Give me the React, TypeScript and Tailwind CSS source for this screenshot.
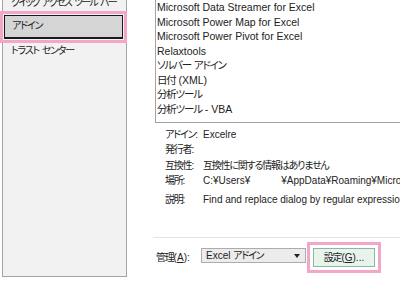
import React from 'react';

const jp = "font-['Liberation_Sans','Noto_Sans_CJK_JP',sans-serif] [font-feature-settings:'palt']";

const addins = [
  'Microsoft Data Streamer for Excel',
  'Microsoft Power Map for Excel',
  'Microsoft Power Pivot for Excel',
  'Relaxtools',
  'ソルバー アドイン',
  '日付 (XML)',
  '分析ツール',
  '分析ツール - VBA',
];

// squeeze the CJK runs so they look like Meiryo UI; latin stays as is
function T({ text, tight }: { text: string; tight?: boolean }) {
  const parts = text.split(/([\u3000-\u30ff\u4e00-\u9fff\uff00-\uffef]+)/);
  return (
    <>
      {parts.map((p, i) =>
        i % 2 === 1 ? (
          <span key={i} className={tight ? 'tracking-[-1.7px]' : 'tracking-[-1.2px]'}>{p}</span>
        ) : (
          <span key={i} className="whitespace-pre">{p}</span>
        )
      )}
    </>
  );
}

export default function App() {
  return (
    <div className={`w-[400px] h-[299px] bg-white overflow-hidden flex text-[#222] ${jp}`}>
      {/* left nav */}
      <div className="w-[127px] shrink-0 pl-[2px]">
        <div className="w-[125px] h-[277px] bg-[#f2f2f2] border-x border-b border-[#a3a3a3] flex flex-col">
          <div className="h-[16px] -mt-[5px] pl-[8px] text-[10px] leading-[16px] whitespace-nowrap">
            <T text="クイック アクセス ツール バー" tight />
          </div>
          <div className="-ml-[3px] w-[127px] h-[32px] border-[3px] border-[#f3a6c8] p-[1px]">
            <div className="h-full border border-b-2 border-[#1a1a1a] bg-[#d5d5d5] pl-[7px] text-[10px] leading-[19px]">
              <T text="アドイン" />
            </div>
          </div>
          <div className="h-[15px] pl-[8px] text-[10px] leading-[15px] whitespace-nowrap">
            <T text="トラスト センター" />
          </div>
        </div>
      </div>

      {/* right content */}
      <div className="flex-1 flex flex-col">
        <div className="ml-[28px] w-[260px] h-[123px] border-l border-b border-[#a3a3a3] bg-white">
          {addins.map((a) => (
            <div key={a} className="h-[14.5px] leading-[14.5px] pl-[1px] text-[10.5px] whitespace-nowrap">
              <T text={a} />
            </div>
          ))}
        </div>

        <div className="ml-[38px] mt-[3.5px] grid grid-cols-[38px_1fr] text-[10px] leading-[15.5px] whitespace-nowrap">
          <span><T text="アドイン:" /></span>
          <span>Excelre</span>
          <span><T text="発行者:" /></span>
          <span></span>
          <span><T text="互換性:" /></span>
          <span><T text="互換性に関する情報はありません" /></span>
          <span><T text="場所:" /></span>
          <span className="flex gap-[31px]">
            <span>C:¥Users¥</span>
            <span>¥AppData¥Roaming¥Microsoft</span>
          </span>
          <span className="mt-[3px]"><T text="説明:" /></span>
          <span className="mt-[3px]">Find and replace dialog by regular expressions</span>
        </div>

        <div className="ml-[26px] mt-[30px] h-px bg-[#e3e3e3]" />

        <div className="ml-[29px] mt-[4px] h-[31px] flex items-center text-[10px]">
          <span className="w-[45px] whitespace-nowrap">
            <T text="管理(" /><span className="underline">A</span><T text="):" />
          </span>
          <div className="w-[105px] h-[15px] -mt-[4px] bg-[#ececec] border border-[#acacac] flex items-center pl-[4px] pr-[5px]">
            <span className="flex-1 whitespace-nowrap"><T text="Excel アドイン" /></span>
            <span className="w-0 h-0 border-x-[3px] border-x-transparent border-t-[4px] border-t-[#222]" />
          </div>
          <div className="ml-[1px] w-[74px] h-[31px] border-[3px] border-[#f3a6c8] p-[3px]">
            <div className="h-full border border-[#86bb9f] bg-[#e7f3ec] flex items-center justify-center whitespace-nowrap">
              <T text="設定(" /><span className="underline">G</span><T text=")..." />
            </div>
          </div>
        </div>
      </div>
    </div>
  );
}
